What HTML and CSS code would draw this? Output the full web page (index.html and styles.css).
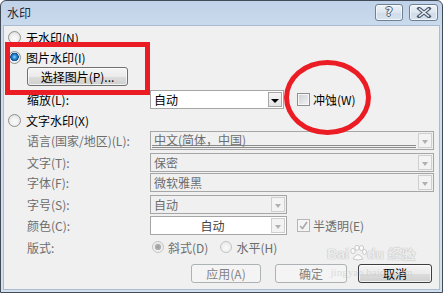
FILE: index.html
```html
<!DOCTYPE html>
<html lang="zh">
<head>
<meta charset="utf-8">
<link rel="stylesheet" href="styles.css">
</head>
<body>
<div class="window">
  <div class="titlebar">
    <span class="title">水印</span>
    <div class="caption-btns">
      <div class="cap-btn help">?</div>
      <div class="cap-btn close">
        <svg width="16" height="11" viewBox="0 0 16 11"><path d="M3 1.5 L13 9.5 M13 1.5 L3 9.5" stroke="#4b5a6d" stroke-width="3.6" stroke-linecap="square" fill="none"/><path d="M3 1.5 L13 9.5 M13 1.5 L3 9.5" stroke="#eef2f6" stroke-width="1.6" fill="none"/></svg>
      </div>
    </div>
  </div>
  <div class="content">
    <div class="row radio-row r1"><span class="radio"></span><span>无水印(N)</span></div>
    <div class="row radio-row r2"><span class="radio checked"></span><span>图片水印(I)</span></div>
    <div class="row btn-row"><div class="btn pick">选择图片(P)...</div></div>
    <div class="row field r4">
      <span class="label">缩放(L):</span>
      <div class="combo short white"><span class="val">自动</span><span class="drop active"><i class="arrow"></i></span></div>
      <span class="check"></span><span class="check-label">冲蚀(W)</span>
    </div>
    <div class="row radio-row r5"><span class="radio"></span><span>文字水印(X)</span></div>
    <div class="row field r6 dis">
      <span class="label">语言(国家/地区)(L):</span>
      <div class="combo long"><span class="val underlined">中文(简体，中国)</span><span class="drop"><i class="arrow"></i></span></div>
    </div>
    <div class="row field r7 dis">
      <span class="label">文字(T):</span>
      <div class="combo long"><span class="val">保密</span><span class="drop"><i class="arrow"></i></span></div>
    </div>
    <div class="row field r8 dis">
      <span class="label">字体(F):</span>
      <div class="combo long"><span class="val">微软雅黑</span><span class="drop"><i class="arrow"></i></span></div>
    </div>
    <div class="row field r9 dis">
      <span class="label">字号(S):</span>
      <div class="combo short"><span class="val">自动</span><span class="drop"><i class="arrow"></i></span></div>
    </div>
    <div class="row field r10 dis">
      <span class="label">颜色(C):</span>
      <div class="combo short white"><span class="val center">自动</span><span class="drop"><i class="arrow"></i></span></div>
      <span class="check checked dis-check"><svg width="9" height="9" viewBox="0 0 9 9"><path d="M1 5 L3.5 7.5 L8 1" stroke="#a9a9a9" stroke-width="1.6" fill="none"/></svg></span><span class="check-label">半透明(E)</span>
    </div>
    <div class="row field r11 dis">
      <span class="label">版式:</span>
      <span class="radio small-dis checked-dis"></span><span class="opt">斜式(D)</span>
      <span class="radio small-dis second"></span><span class="opt">水平(H)</span>
    </div>
    <div class="row buttons">
      <div class="btn disabled apply">应用(A)</div>
      <div class="btn disabled ok">确定</div>
      <div class="btn cancel">取消</div>
    </div>
  </div>
  <div class="annot rect"></div>
  <div class="annot ellipse"></div>
  <div class="watermark">
    <span class="wm-brand">Bai<svg class="paw" width="18" height="17" viewBox="0 0 18 17"><g fill="rgba(255,255,255,0.75)" stroke="#c9c9c9" stroke-width="1"><ellipse cx="4" cy="6" rx="2.2" ry="2.6"/><ellipse cx="8" cy="2.8" rx="2.2" ry="2.5"/><ellipse cx="12.5" cy="3" rx="2.2" ry="2.5"/><ellipse cx="15.5" cy="7" rx="2" ry="2.5"/><path d="M4 14 Q9 5 14 14 Q9 16 4 14Z"/></g></svg>du 经验</span>
    <span class="wm-url">jingyan.baidu.com</span>
  </div>
</div>
</body>
</html>
```

FILE: styles.css
```css
* { box-sizing: border-box; }
html, body { margin: 0; padding: 0; }
body {
  width: 443px;
  height: 293px;
  overflow: hidden;
  font-family: "Noto Sans CJK SC", "Liberation Sans", sans-serif;
  font-size: 12px;
  color: #000;
}
.window {
  position: relative;
  width: 443px;
  height: 293px;
  border: 1px solid #434b57;
  border-radius: 6px 6px 0 0;
  background: linear-gradient(#c0d2e9, #cddcee 30px, #d3e0f0);
  display: flex;
  flex-direction: column;
}
.titlebar {
  height: 24px;
  display: flex;
  align-items: flex-start;
  justify-content: space-between;
  flex: none;
}
.title {
  margin: 4px 0 0 6px;
  font-size: 12px;
  line-height: 16px;
  color: #1e2a3a;
}
.caption-btns {
  display: flex;
  gap: 6px;
  margin: 3px 4px 0 0;
}
.cap-btn {
  height: 17px;
  border: 1px solid #6f7f94;
  border-radius: 3px;
  background: linear-gradient(#eef3f8, #dce5f0 50%, #cfdbe9 51%, #d9e3ef);
  box-shadow: inset 0 0 0 1px rgba(255,255,255,0.6);
  display: flex;
  align-items: center;
  justify-content: center;
}
.cap-btn.help {
  width: 28px;
  font-family: "DejaVu Sans", sans-serif;
  font-weight: bold;
  font-size: 12px;
  color: #eef2f6;
  text-shadow: 1px 0 0 #4b5a6d, -1px 0 0 #4b5a6d, 0 1px 0 #4b5a6d, 0 -1px 0 #4b5a6d;
  line-height: 15px;
}
.cap-btn.close { width: 29px; }
.content {
  flex: 1;
  margin: 0 2px 2px 2px;
  border: 1px solid #a9bbd1;
  background: #f0f0f0;
  display: flex;
  flex-direction: column;
}
.row {
  display: flex;
  align-items: center;
  flex: none;
  white-space: nowrap;
}
.radio-row { height: 20px; padding-left: 4px; gap: 5px; }
.r1 { margin-top: 1px; }
.radio {
  width: 13px;
  height: 13px;
  border-radius: 50%;
  border: 1px solid #8f9090;
  background: radial-gradient(circle at 50% 60%, #fbfbfb 0, #f2f2f2 40%, #d6d6d6 100%);
  flex: none;
}
.radio.checked {
  background:
    radial-gradient(circle at 50% 45%, #8fd3ff 0, #2f8fd6 2px, #0b4f8e 4px, transparent 4.5px),
    radial-gradient(circle at 50% 60%, #fbfbfb 0, #eaeaea 60%, #cfcfcf 100%);
}
.btn-row { height: 19px; padding-left: 23px; }
.btn {
  height: 19px;
  border: 1px solid #707070;
  border-radius: 3px;
  background: linear-gradient(#f4f4f4, #ebebeb 50%, #dddddd 51%, #cfcfcf);
  box-shadow: inset 0 0 0 1px rgba(255,255,255,0.7);
  display: flex;
  align-items: center;
  justify-content: center;
  line-height: 16px;
}
.btn.pick { width: 101px; }
.field { height: 19px; padding-left: 23px; }
.label { width: 123px; flex: none; }
.dis .label, .dis .opt, .dis .check-label { color: #6d6d6d; }
.combo {
  height: 19px;
  border: 1px solid #a6a6a6;
  background: #f0f0f0;
  display: flex;
  align-items: stretch;
  padding: 1px;
  flex: none;
}
.combo.white { background: #fff; }
.combo.short { width: 137px; }
.combo.long { width: 284px; }
.val {
  flex: 1;
  padding-left: 2px;
  line-height: 15px;
  color: #6d6d6d;
}
.r4 .val { color: #000; }
.val.center { text-align: center; color: #444; }
.val.underlined {
  border-bottom: 3px double #8a8a8a;
  margin-right: 2px;
  line-height: 13px;
}
.drop {
  width: 14px;
  border: 1px solid #cfcfcf;
  background: #f3f3f3;
  display: flex;
  align-items: center;
  justify-content: center;
}
.drop.active {
  border-color: #a7a7a7;
  background: linear-gradient(#f6f6f6, #e3e3e3);
}
.arrow {
  width: 0;
  height: 0;
  border-left: 3.5px solid transparent;
  border-right: 3.5px solid transparent;
  border-top: 4px solid #b0b0b0;
  margin-top: 2px;
}
.drop.active .arrow { border-top-color: #000; border-left-width: 4px; border-right-width: 4px; }
.r4 { margin-top: 4px; }
.r4 .combo { width: 134px; }
.check {
  width: 13px;
  height: 13px;
  border: 1px solid #8f9090;
  background: linear-gradient(135deg, #cbced3, #f4f4f4);
  box-shadow: inset 0 0 0 1px #f6f6f6;
  margin-left: 13px;
  flex: none;
  display: flex;
  align-items: center;
  justify-content: center;
}
.check.dis-check {
  border-color: #b5b5b5;
  background: #f4f4f4;
  margin-left: 10px;
}
.check-label { margin-left: 3px; }
.r5 { margin-top: 1px; }
.r6 { margin-top: 1px; }
.r7 { margin-top: 3px; }
.r8 { margin-top: 1px; }
.r9 { margin-top: 3px; }
.r10 { margin-top: 2px; }
.r11 { margin-top: 2px; height: 20px; }
.radio.small-dis {
  width: 12px;
  height: 12px;
  border-color: #c4c4c4;
  background: radial-gradient(circle at 50% 60%, #fafafa 0, #eeeeee 60%, #e0e0e0 100%);
  margin-left: 2px;
}
.radio.checked-dis {
  background:
    radial-gradient(circle, #9a9a9a 0, #b5b5b5 3px, transparent 3.6px),
    radial-gradient(circle at 50% 60%, #fafafa 0, #eeeeee 60%, #e0e0e0 100%);
}
.opt { margin-left: 4px; }
.radio.second { margin-left: 12px; }
.buttons {
  margin-top: 7px;
  height: 19px;
  padding-left: 187px;
  gap: 0;
}
.btn.disabled {
  border-color: #adb2b5;
  background: #f4f4f4;
  box-shadow: none;
  color: #838383;
}
.btn.apply { width: 70px; }
.btn.ok { width: 72px; margin-left: 14px; }
.btn.cancel {
  width: 74px;
  margin-left: 11px;
  border-color: #3d3d3d;
}
.annot { position: absolute; pointer-events: none; }
.rect {
  left: 4px;
  top: 41px;
  width: 145px;
  height: 53px;
  border: 5px solid #ec1c24;
}
.ellipse {
  left: 283px;
  top: 59px;
  width: 87px;
  height: 75px;
  border: 5px solid #ec1c24;
  border-radius: 50%;
}
.watermark {
  position: absolute;
  left: 323px;
  top: 243px;
  width: 95px;
  display: flex;
  flex-direction: column;
  align-items: center;
  pointer-events: none;
}
.wm-brand {
  font-family: "Liberation Sans", sans-serif;
  font-weight: bold;
  font-size: 14px;
  line-height: 20px;
  color: rgba(255,255,255,0.75);
  text-shadow: 0 0 1px #b8b8b8, 0 0 1px #b8b8b8;
  display: flex;
  align-items: flex-end;
}
.paw { margin: 0 0 2px 0; }
.wm-url {
  font-family: "Liberation Serif", serif;
  font-size: 11px;
  line-height: 12px;
  color: rgba(200,200,200,0.6);
  margin-top: 2px;
}
```
